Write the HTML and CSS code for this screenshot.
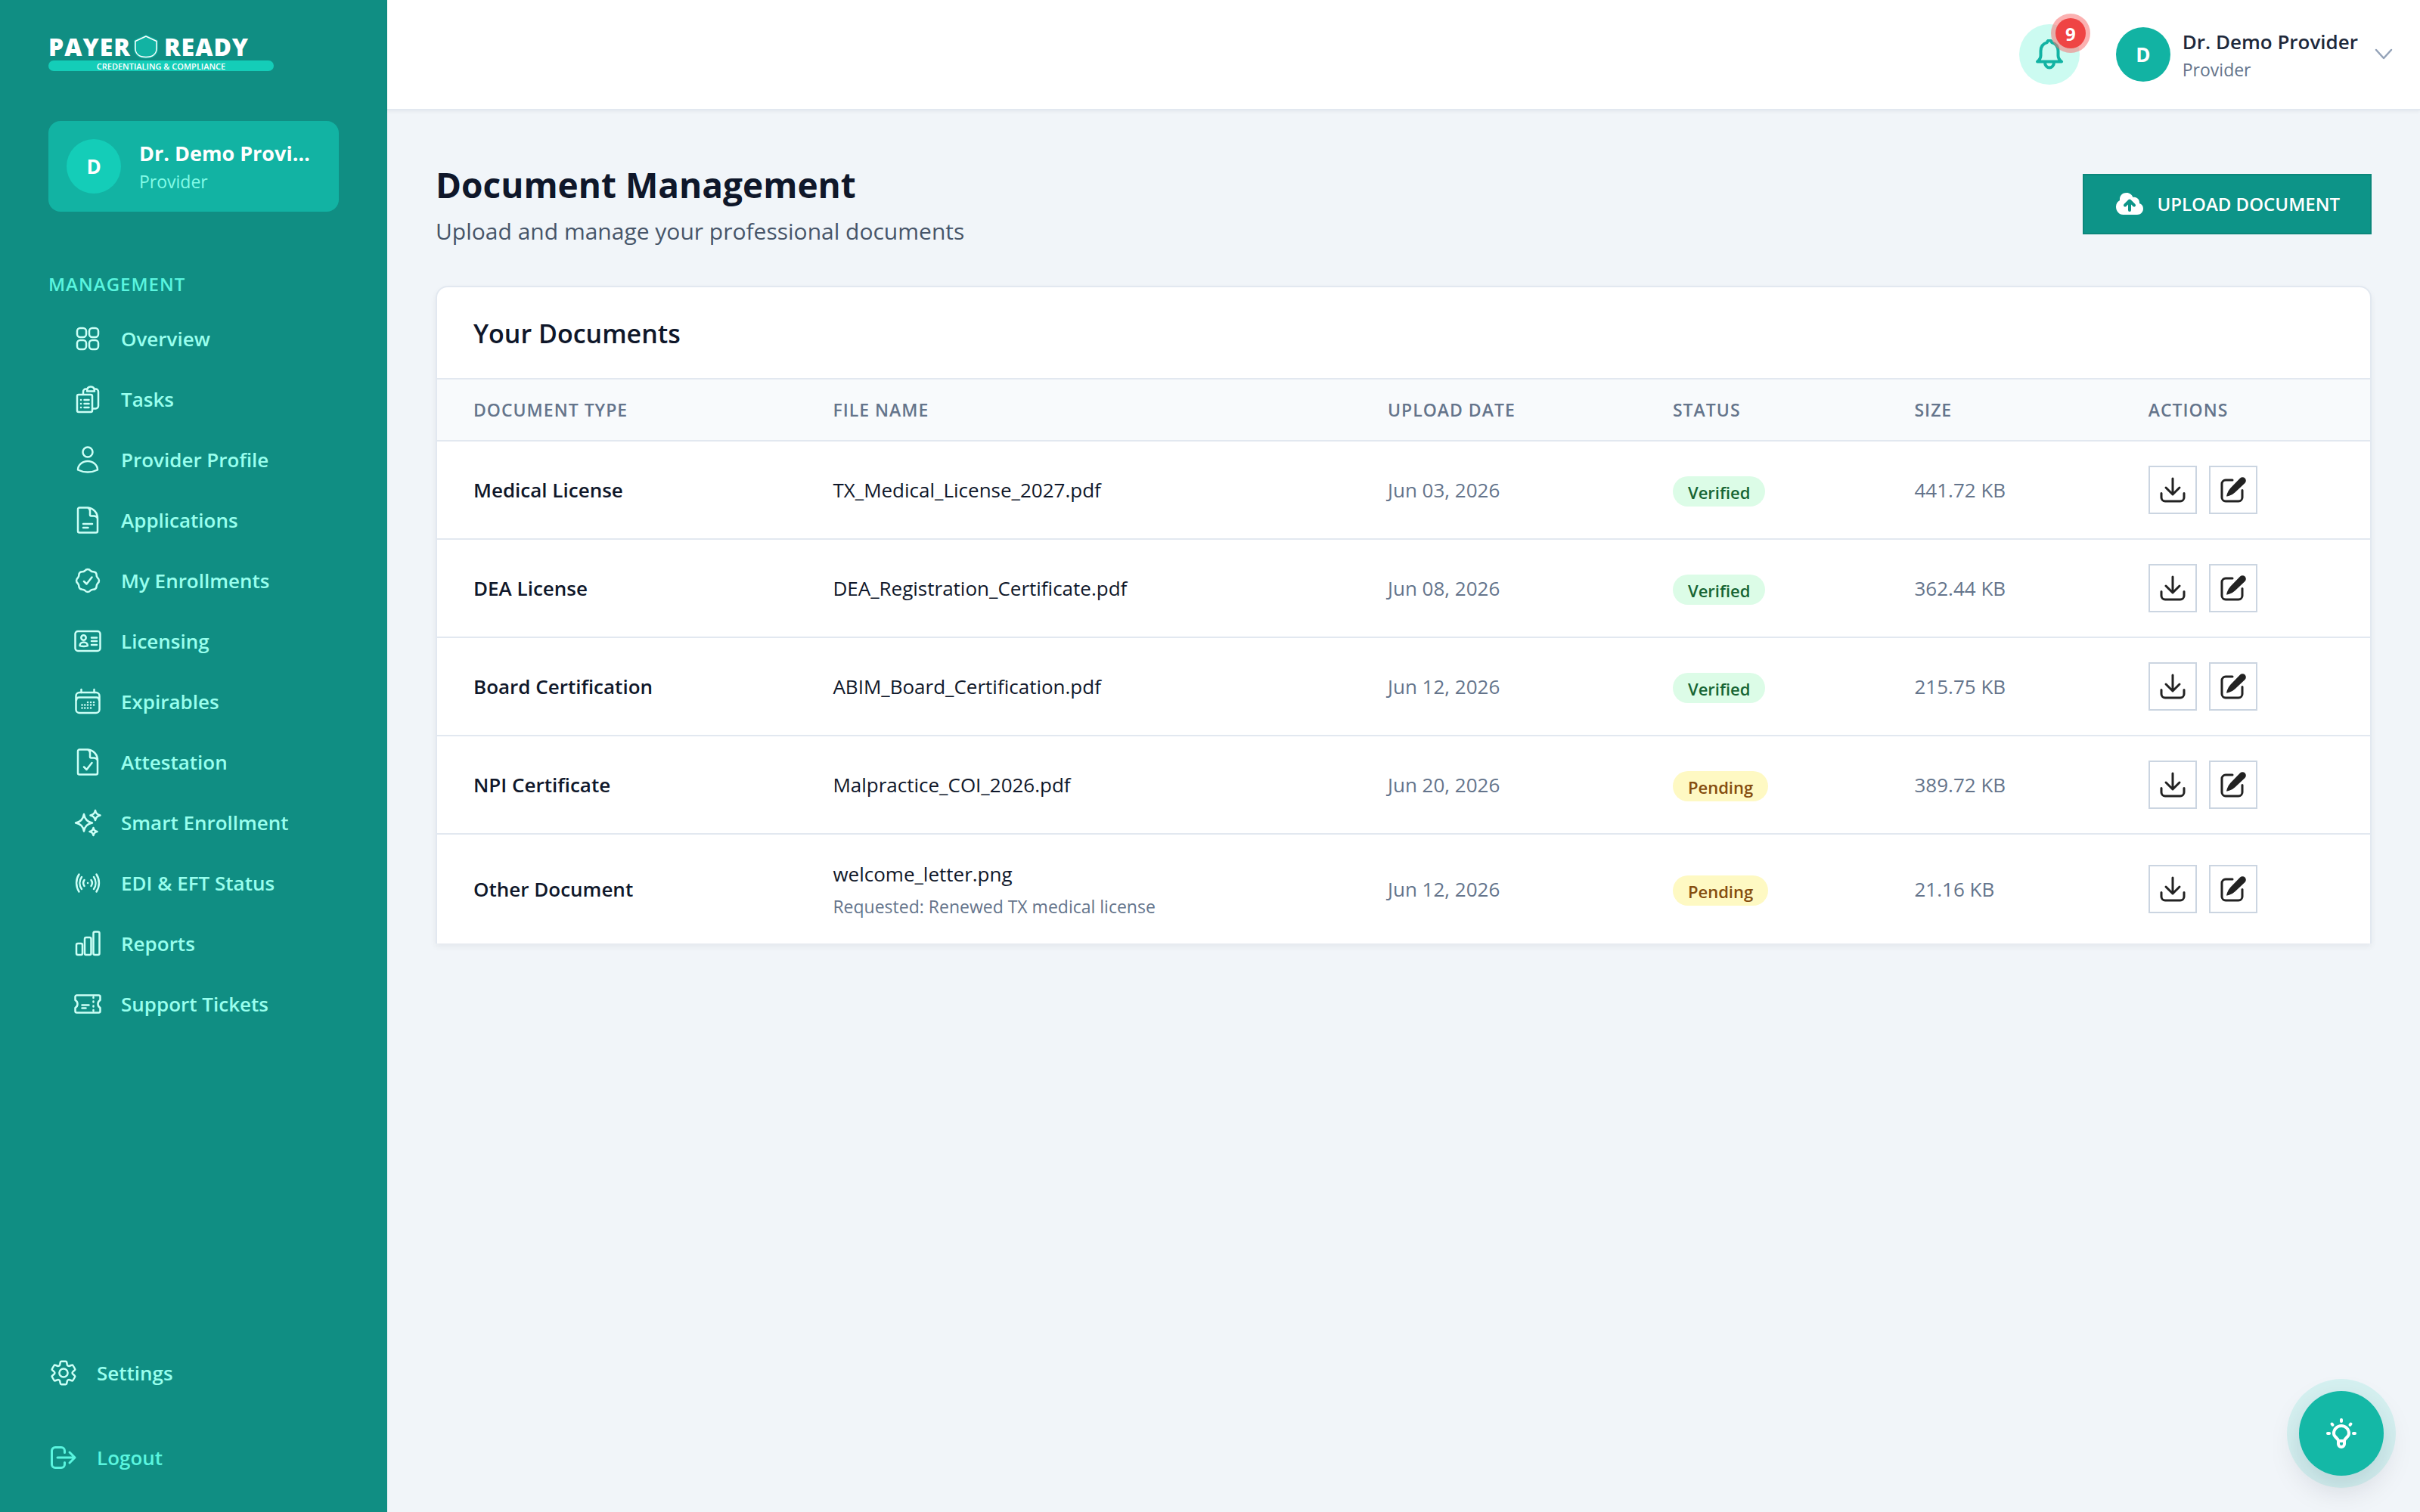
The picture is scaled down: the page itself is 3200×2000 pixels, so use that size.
FILE: index.html
```html
<!DOCTYPE html>
<html lang="en">
<head>
<meta charset="utf-8">
<meta name="viewport" content="width=device-width, initial-scale=1">
<title>Document Management – Payer Ready</title>
<link rel="stylesheet" href="styles.css">
</head>
<body>
<svg class="sprite" aria-hidden="true">
  <symbol id="i-grid" viewBox="0 0 40 40"><rect x="6" y="6" width="12" height="12" rx="4"/><rect x="22" y="6" width="12" height="12" rx="4"/><rect x="6" y="22" width="12" height="12" rx="4"/><rect x="22" y="22" width="12" height="12" rx="4"/></symbol>
  <symbol id="i-tasks" viewBox="0 0 40 40"><rect x="6" y="14" width="20" height="23" rx="2"/><path d="M11 21h.1M11 26h.1M11 31h.1M15.500 21h6M15.500 26h6M15.500 31h6"/><path d="M14 13.500V10a3.500 3.500 0 0 1 3.500-3.500h1M29.500 6.500h1A3.500 3.500 0 0 1 34 10v19a3.500 3.500 0 0 1-3.500 3.500H26.500"/><path d="M19 9.500c0-4 2-6 5-6s5 2 5 6z"/></symbol>
  <symbol id="i-user" viewBox="0 0 40 40"><circle cx="20" cy="10" r="6.500"/><path d="M7 33.500a13 11.500 0 0 1 26 0q-6 3-13 3t-13-3z"/></symbol>
  <symbol id="i-doc" viewBox="0 0 40 40"><path d="M20 3.500H9A2 2 0 0 0 7 5.500v29a2 2 0 0 0 2 2h22a2 2 0 0 0 2-2V18A14 14 0 0 0 20 3.500q3 1 3 4.500v5a1.500 1.500 0 0 0 1.500 1.500h3.500q4 0 5 3.500M14 25h12M14 30h6.500"/></symbol>
  <symbol id="i-doc-check" viewBox="0 0 40 40"><path d="M20 3.500H9A2 2 0 0 0 7 5.500v29a2 2 0 0 0 2 2h22a2 2 0 0 0 2-2V18A14 14 0 0 0 20 3.500q3 1 3 4.500v5a1.500 1.500 0 0 0 1.500 1.500h3.500q4 0 5 3.500M15 26.500l3.500 3.500 7-9"/></symbol>
  <symbol id="i-badge" viewBox="0 0 40 40"><path d="M15 21l3.500 3.500 7-9"/><path d="M20 5q2.200 0 3.800 2a5 5 0 0 0 3.300 1.300q4.600.2 4.600 4.600a5 5 0 0 0 1.300 3.300q2 1.600 2 3.800t-2 3.800a5 5 0 0 0-1.300 3.300q-.2 4.600-4.600 4.600a5 5 0 0 0-3.300 1.300q-1.600 2-3.800 2t-3.800-2a5 5 0 0 0-3.300-1.300q-4.600-.2-4.600-4.600a5 5 0 0 0-1.300-3.300q-2-1.600-2-3.800t2-3.800a5 5 0 0 0 1.300-3.300q.2-4.600 4.600-4.600a5 5 0 0 0 3.300-1.300q1.600-2 3.800-2z"/></symbol>
  <symbol id="i-id" viewBox="0 0 40 40"><rect x="3.500" y="7" width="33" height="26" rx="3.500"/><circle cx="14.500" cy="15.500" r="3.200"/><path d="M9.500 26a5.200 4.600 0 0 1 10.400 0q-5 2-10.400 0zM25 15.500h7M25 20h7M25 25h7"/></symbol>
  <symbol id="i-calendar" viewBox="0 0 40 40"><rect x="4.500" y="8" width="31" height="27" rx="4.500"/><path d="M11.500 4v4M28.500 4v4M5 18q0-3.500 3.500-3.500h23q3.500 0 3.500 3.500M20 21h.1M24 21h.1M28 21h.1M12.500 24.500h.1M16.200 24.500h.1M20 24.500h.1M24 24.500h.1M28 24.500h.1M12.500 28.500h.1M16.200 28.500h.1M20 28.500h.1M24 28.500h.1"/></symbol>
  <symbol id="i-sparkles" viewBox="0 0 40 40"><path d="M15 9q1.500 9.500 11 11.500-9.500 1.500-11 11-1.500-9.500-11-11Q13.500 18.500 15 9zM30 4q1 5.500 6.500 6.500Q31 11.500 30 17q-1-5.500-6.500-6.500Q29 9.500 30 4zM27.500 27q.8 4.200 5 5-4.200.8-5 5-.8-4.200-5-5 4.200-.8 5-5z"/></symbol>
  <symbol id="i-signal" viewBox="0 0 40 40"><path d="M20 20h.1M15.500 16a7 7 0 0 0 0 8M24.500 16a7 7 0 0 1 0 8M12 12a14 14 0 0 0 0 16M28 12a14 14 0 0 1 0 16M8.500 8.500a21 21 0 0 0 0 23M31.500 8.500a21 21 0 0 1 0 23"/></symbol>
  <symbol id="i-bars" viewBox="0 0 40 40"><rect x="5" y="20" width="8" height="15" rx="2"/><rect x="16" y="12" width="8.500" height="23" rx="2"/><rect x="27.500" y="4.500" width="8" height="30.500" rx="2"/></symbol>
  <symbol id="i-ticket" viewBox="0 0 40 40"><path d="M5.500 8.500h29a2 2 0 0 1 2 2v4.300a6 6 0 0 0 0 10.400v4.300a2 2 0 0 1-2 2h-29a2 2 0 0 1-2-2v-4.300a6 6 0 0 0 0-10.400v-4.300a2 2 0 0 1 2-2zM12.500 21.500h9M12.500 25.500h5M27.500 11v1M27.500 16.500v1M27.500 22.500v1M27.500 28v1"/></symbol>
  <symbol id="i-gear" viewBox="0 0 40 40"><circle cx="20" cy="20" r="5.600"/><path d="M17.300 4.800h5.400a1.500 1.500 0 0 1 1.500 1.300l.6 3a2.400 2.400 0 0 0 3.200 1.700l2.800-1a1.500 1.500 0 0 1 1.900.7l2.300 4a1.500 1.500 0 0 1-.4 2l-2.200 1.900a2 2 0 0 0 0 3.200l2.200 1.900a1.500 1.500 0 0 1 .4 2l-2.300 4a1.500 1.500 0 0 1-1.900.7l-2.800-1a2.400 2.400 0 0 0-3.200 1.700l-.6 3a1.500 1.500 0 0 1-1.500 1.300h-5.400a1.500 1.500 0 0 1-1.500-1.300l-.6-3a2.400 2.400 0 0 0-3.200-1.700l-2.800 1a1.500 1.500 0 0 1-1.900-.7l-2.300-4a1.500 1.500 0 0 1 .4-2l2.200-1.900a2 2 0 0 0 0-3.200l-2.200-1.900a1.500 1.500 0 0 1-.4-2l2.300-4a1.500 1.500 0 0 1 1.900-.7l2.800 1a2.400 2.400 0 0 0 3.200-1.700l.6-3a1.500 1.500 0 0 1 1.500-1.300z"/></symbol>
  <symbol id="i-logout" viewBox="0 0 40 40"><path d="M21.500 13.500V11A4.500 4.500 0 0 0 17 6.500H9A4.500 4.500 0 0 0 4.500 11v18A4.500 4.500 0 0 0 9 33.500h8a4.500 4.500 0 0 0 4.500-4.500v-2.500M12 20h23M28 13l7 7-7 7"/></symbol>
  <symbol id="i-bell" viewBox="0 0 40 40"><path d="M20 1.500a3 3 0 0 1 3 2.600c5 1.400 8.500 5.400 8.500 11.400v6q0 4.500 4.500 8H4q4.500-3.500 4.500-8v-6C8.500 9.500 12 5.500 17 4.100a3 3 0 0 1 3-2.600zM14 30.500a6 7 0 0 0 12 0"/></symbol>
  <symbol id="i-chevron" viewBox="0 0 24 16"><path d="M2 2l10 11L22 2"/></symbol>
  <symbol id="i-cloud" viewBox="0 0 36 32"><path class="fill" d="M14 1C7.500 1 4.500 5.500 5 11 2 12.500 0 15.500 0 19.500 0 25 4 30 9.500 30h18.500c4.500 0 8-3.500 8-8 0-3.500-2-6-5-7 .5-5-3.500-9-8.500-8-1.500-3.500-4.500-6-8.500-6z"/><path class="arrow" d="M18 24V12M12 17.500l6-6 6 6"/></symbol>
  <symbol id="i-download" viewBox="0 0 36 36"><path d="M18 3v21M9 15l9 9 9-9M3 22.500V28a5 5 0 0 0 5 5h20a5 5 0 0 0 5-5v-5.500"/></symbol>
  <symbol id="i-edit" viewBox="0 0 36 36"><path d="M17 5H8a5 5 0 0 0-5 5v18a5 5 0 0 0 5 5h17a5 5 0 0 0 5-5v-9.500"/><path class="fill" d="M33.500 2.500a4.500 4.500 0 0 0-6.400 0L14.500 15.500q-3 3.200-4.500 7.500l-.8 2.700q-.2 1.100.9.900l2.700-.8q4.500-1.300 7.700-4.500L33.500 8.900a4.500 4.500 0 0 0 0-6.400z"/></symbol>
  <symbol id="i-bulb" viewBox="0 0 40 40"><path d="M16 30c0-4-6-4.500-6-10a10 10 0 0 1 20 0c0 5.500-6 6-6 10zM16 30v4a4 4 0 0 0 8 0v-4M20 2v2M7.500 7.500l1 1.200M32.500 7.500l-1 1.200M2 20h2M36 20h2"/></symbol>
</svg>
<div class="app">
  <aside class="sidebar">
    <a class="logo" href="#">
      <span class="logo-name">PAYER<svg class="logo-shield" viewBox="0 0 32 32" aria-hidden="true"><path class="halo" d="M16 2 2 8.500V18c0 7 5 11.500 14 11.500S30 25 30 18V8.500z"/><path d="M16 2 2 8.500V18c0 7 5 11.500 14 11.500S30 25 30 18V8.500z"/></svg>READY</span>
      <span class="logo-tag">CREDENTIALING &amp; COMPLIANCE</span>
    </a>
    <div class="profile">
      <span class="avatar">D</span>
      <span class="who"><strong>Dr. Demo Provider</strong><small>Provider</small></span>
    </div>
    <nav class="nav" aria-labelledby="nav-title">
      <h2 id="nav-title">MANAGEMENT</h2>
      <a href="#"><svg><use href="#i-grid"/></svg>Overview</a>
      <a href="#"><svg><use href="#i-tasks"/></svg>Tasks</a>
      <a href="#"><svg><use href="#i-user"/></svg>Provider Profile</a>
      <a href="#"><svg><use href="#i-doc"/></svg>Applications</a>
      <a href="#"><svg><use href="#i-badge"/></svg>My Enrollments</a>
      <a href="#"><svg><use href="#i-id"/></svg>Licensing</a>
      <a href="#"><svg><use href="#i-calendar"/></svg>Expirables</a>
      <a href="#"><svg><use href="#i-doc-check"/></svg>Attestation</a>
      <a href="#"><svg><use href="#i-sparkles"/></svg>Smart Enrollment</a>
      <a href="#"><svg><use href="#i-signal"/></svg>EDI &amp; EFT Status</a>
      <a href="#"><svg><use href="#i-bars"/></svg>Reports</a>
      <a href="#"><svg><use href="#i-ticket"/></svg>Support Tickets</a>
    </nav>
    <div class="foot">
      <a href="#"><svg><use href="#i-gear"/></svg>Settings</a>
      <button type="button" class="logout"><svg><use href="#i-logout"/></svg>Logout</button>
    </div>
  </aside>
  <div class="page">
    <header class="topbar">
      <button type="button" class="bell" aria-label="Notifications"><svg><use href="#i-bell"/></svg><span class="count">9</span></button>
      <button type="button" class="account">
        <span class="avatar">D</span>
        <span class="who"><strong>Dr. Demo Provider</strong><small>Provider</small></span>
        <svg class="chevron"><use href="#i-chevron"/></svg>
      </button>
    </header>
    <main>
      <div class="heading">
        <div>
          <h1>Document Management</h1>
          <p>Upload and manage your professional documents</p>
        </div>
        <button type="button" class="upload"><svg><use href="#i-cloud"/></svg>UPLOAD DOCUMENT</button>
      </div>
      <section class="card">
        <h2>Your Documents</h2>
        <table>
          <colgroup><col class="c-type"><col class="c-file"><col class="c-date"><col class="c-status"><col class="c-size"><col></colgroup>
          <thead><tr><th>DOCUMENT TYPE</th><th>FILE NAME</th><th>UPLOAD DATE</th><th>STATUS</th><th>SIZE</th><th>ACTIONS</th></tr></thead>
          <tbody>
            <tr><th scope="row">Medical License</th><td class="file">TX_Medical_License_2027.pdf</td><td>Jun 03, 2026</td><td><span class="pill verified">Verified</span></td><td>441.72 KB</td><td><div class="actions"><button type="button" aria-label="Download"><svg><use href="#i-download"/></svg></button><button type="button" aria-label="Edit"><svg><use href="#i-edit"/></svg></button></div></td></tr>
            <tr><th scope="row">DEA License</th><td class="file">DEA_Registration_Certificate.pdf</td><td>Jun 08, 2026</td><td><span class="pill verified">Verified</span></td><td>362.44 KB</td><td><div class="actions"><button type="button" aria-label="Download"><svg><use href="#i-download"/></svg></button><button type="button" aria-label="Edit"><svg><use href="#i-edit"/></svg></button></div></td></tr>
            <tr><th scope="row">Board Certification</th><td class="file">ABIM_Board_Certification.pdf</td><td>Jun 12, 2026</td><td><span class="pill verified">Verified</span></td><td>215.75 KB</td><td><div class="actions"><button type="button" aria-label="Download"><svg><use href="#i-download"/></svg></button><button type="button" aria-label="Edit"><svg><use href="#i-edit"/></svg></button></div></td></tr>
            <tr><th scope="row">NPI Certificate</th><td class="file">Malpractice_COI_2026.pdf</td><td>Jun 20, 2026</td><td><span class="pill pending">Pending</span></td><td>389.72 KB</td><td><div class="actions"><button type="button" aria-label="Download"><svg><use href="#i-download"/></svg></button><button type="button" aria-label="Edit"><svg><use href="#i-edit"/></svg></button></div></td></tr>
            <tr><th scope="row">Other Document</th><td class="file">welcome_letter.png<small>Requested: Renewed TX medical license</small></td><td>Jun 12, 2026</td><td><span class="pill pending">Pending</span></td><td>21.16 KB</td><td><div class="actions"><button type="button" aria-label="Download"><svg><use href="#i-download"/></svg></button><button type="button" aria-label="Edit"><svg><use href="#i-edit"/></svg></button></div></td></tr>
          </tbody>
        </table>
      </section>
    </main>
  </div>
</div>
<button type="button" class="fab" aria-label="Tips"><svg><use href="#i-bulb"/></svg></button>
</body>
</html>
```
FILE: styles.css
```css
* { box-sizing: border-box; }
body { margin: 0; font-family: "Open Sans", "Noto Sans", sans-serif; font-size: 26px; line-height: 40px; color: #0f172a; background: #f1f5f9; }
h1, h2, p { margin: 0; }
a { color: inherit; text-decoration: none; }
button { font: inherit; color: inherit; background: none; border: 0; padding: 0; cursor: pointer; }
svg { flex: none; width: 40px; height: 40px; fill: none; stroke: currentColor; stroke-width: 2.5; stroke-linecap: round; stroke-linejoin: round; }
.sprite { display: none; }
.fill { fill: currentColor; stroke: none; }
small { font-size: 23px; line-height: 34px; }

.app { display: flex; min-height: 100vh; }
.sidebar { flex: none; width: 512px; padding: 44px 64px 32px; display: flex; flex-direction: column; background: #108e83; color: #99ffee; }
.logo { align-self: flex-start; width: 298px; margin-bottom: 66px; color: #fff; }
.logo-name { display: flex; align-items: center; height: 36px; font-size: 32px; font-weight: 800; line-height: 36px; letter-spacing: 1px; }
.logo-shield { width: 32px; height: 32px; margin: 0 8px 0 4px; overflow: visible; fill: #12b3a3; stroke: #fff; stroke-width: 1.5; }
.logo-shield .halo { stroke: #12b3a3; stroke-width: 4; }
.logo-tag { display: block; height: 14px; border-radius: 7px; background: #14cdb8; font-size: 11px; font-weight: 600; line-height: 16px; text-align: center; }

.avatar { flex: none; width: 72px; height: 72px; border-radius: 50%; background: #12b3a3; color: #fff; font-weight: 700; line-height: 72px; text-align: center; }
.who { display: flex; flex-direction: column; min-width: 0; text-align: left; }
.who strong { line-height: 40px; overflow: hidden; text-overflow: ellipsis; white-space: nowrap; }
.profile { display: flex; align-items: center; gap: 24px; height: 120px; padding: 24px; border-radius: 16px; background: #12b3a3; }
.profile .avatar { background: #14cdb8; }
.profile strong { color: #fff; font-size: 27px; font-weight: 700; }
.profile small { color: #83fbe7; }

.nav { display: flex; flex-direction: column; gap: 16px; margin-top: 80px; font-weight: 600; }
.nav h2 { font-size: 24px; font-weight: 600; line-height: 32px; letter-spacing: 1px; color: #5af5df; margin-bottom: 8px; }
.nav a { display: flex; align-items: center; gap: 24px; height: 64px; padding-left: 32px; }
.nav svg, .foot a svg { color: #ccfff6; }
.foot { margin-top: auto; display: flex; flex-direction: column; gap: 32px; font-weight: 600; }
.foot a, .foot button { display: flex; align-items: center; gap: 24px; height: 80px; }
.logout { color: #5af5df; }
.logout svg { stroke-width: 3; }

.page { flex: 1; min-width: 0; }
.topbar { display: flex; align-items: center; justify-content: flex-end; gap: 48px; height: 146px; padding: 0 36px; background: #fff; border-bottom: 2px solid #e2e8f0; box-shadow: 0 2px 4px rgba(15, 23, 42, .05); }
.bell { position: relative; display: flex; align-items: center; justify-content: center; width: 80px; height: 80px; border-radius: 50%; background: #ccfbf1; color: #12b3a3; }
.bell svg { stroke-width: 4; overflow: visible; }
.count { position: absolute; top: -8px; right: -8px; width: 40px; height: 40px; border-radius: 50%; background: #ef4444; box-shadow: 0 0 0 6px rgba(248, 113, 113, .55); color: #fff; font-size: 24px; font-weight: 700; line-height: 42px; text-align: center; }
.account { display: flex; align-items: center; gap: 16px; color: #1e293b; }
.account strong { font-weight: 600; }
.account small { color: #64748b; }
.chevron { width: 24px; height: 16px; margin-left: 6px; color: #94a3b8; }

main { padding: 64px; }
.heading { display: flex; align-items: flex-start; justify-content: space-between; padding-top: 6px; }
h1 { font-size: 46px; font-weight: 700; line-height: 56px; }
.heading p { font-size: 30px; line-height: 48px; margin-top: 10px; color: #475569; }
.upload { display: flex; align-items: center; gap: 18px; height: 80px; margin-top: 14px; padding: 0 40px 0 42px; border: 2px solid #0b877b; background: #0d9488; color: #fff; font-size: 24px; font-weight: 600; }
.upload svg { width: 36px; height: 32px; }
.arrow { stroke: #0d9488; stroke-width: 4; }

.card { margin-top: 48px; background: #fff; border: 2px solid #e2e8f0; border-bottom: 0; border-radius: 16px 16px 0 0; box-shadow: 0 4px 8px rgba(15, 23, 42, .06); }
.card h2 { padding: 37px 48px 35px; font-size: 34px; font-weight: 600; line-height: 48px; }
table { width: 100%; table-layout: fixed; border-collapse: separate; border-spacing: 0; text-align: left; }
.c-type { width: 18.6%; }
.c-file { width: 28.7%; }
.c-date { width: 14.75%; }
.c-status { width: 12.5%; }
.c-size { width: 12.1%; }
thead th { height: 84px; padding: 0 48px; border: solid #e2e8f0; border-width: 2px 0; background: #f8fafc; color: #64748b; font-size: 23px; font-weight: 600; letter-spacing: 1px; }
tbody th, tbody td { height: 130px; padding: 0 48px; border-bottom: 2px solid #e2e8f0; color: #64748b; }
tbody th { color: #0f172a; font-weight: 600; }
tbody .file { color: #0f172a; }
tbody tr:last-child > * { height: 144px; border-bottom: 0; }
.file small { display: block; margin-top: 6px; color: #64748b; }
.pill { display: inline-block; height: 40px; padding: 0 20px; border-radius: 20px; font-size: 22px; font-weight: 600; line-height: 42px; vertical-align: middle; }
.verified { background: #dcfce7; color: #166534; }
.pending { background: #fef9c3; color: #854d0e; }
.actions { display: flex; gap: 16px; }
.actions button { display: flex; align-items: center; justify-content: center; width: 64px; height: 64px; border: 2px solid #cbd5e1; background: #fff; color: #222; }
.actions svg { width: 36px; height: 36px; stroke-width: 3; }

.fab { position: fixed; right: 48px; bottom: 48px; display: flex; align-items: center; justify-content: center; width: 112px; height: 112px; border-radius: 50%; background: #14b8a6; color: #fff; box-shadow: 0 0 0 16px rgba(20, 205, 184, .13), 0 16px 40px rgba(15, 23, 42, .15); }
.fab svg { stroke-width: 4; }
```
